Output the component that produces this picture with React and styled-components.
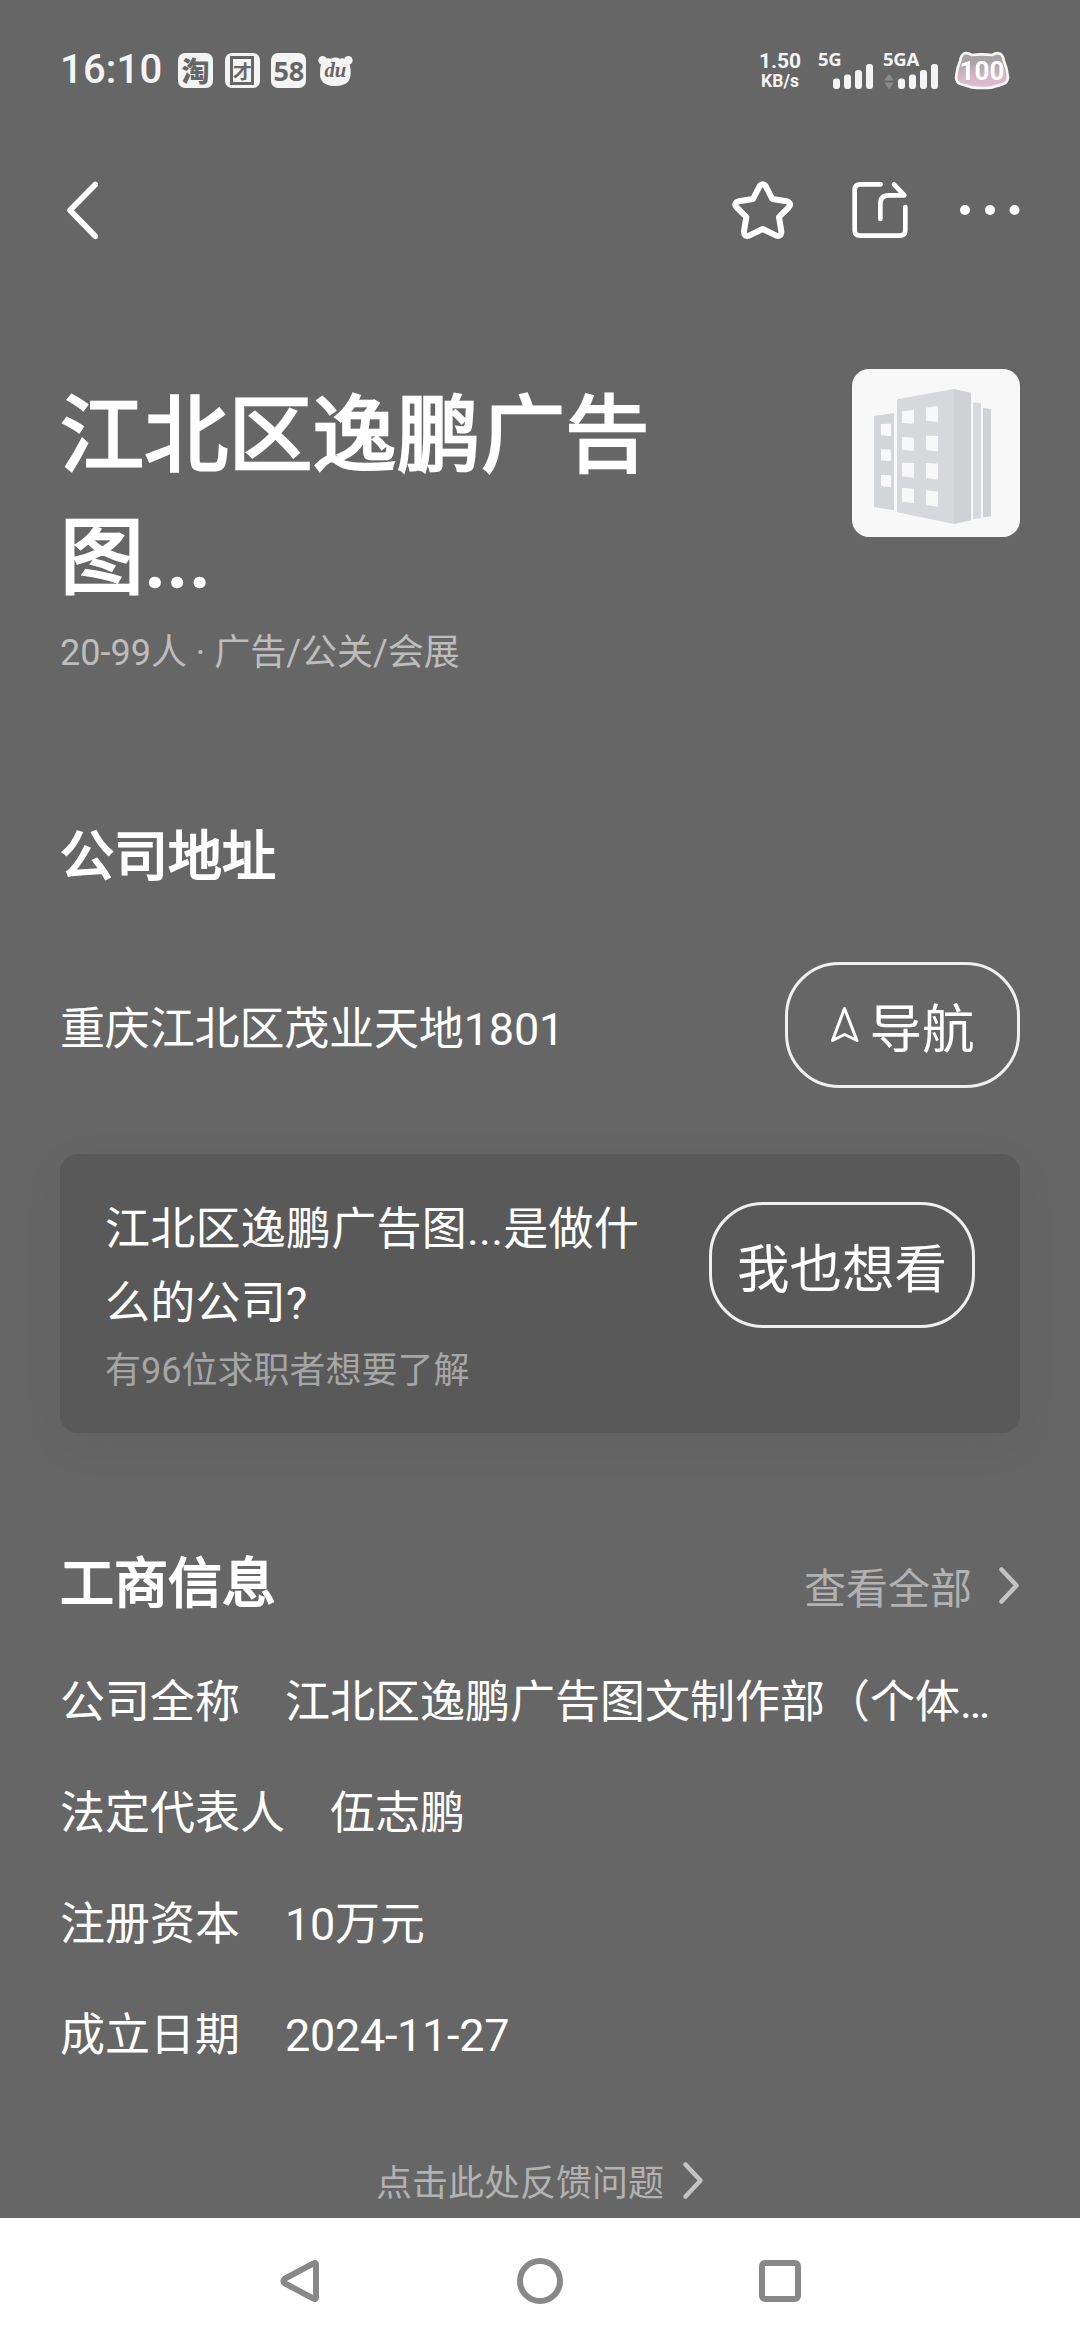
import styled, { createGlobalStyle } from "styled-components";

const businessInfo = [
  { label: "公司全称", value: "江北区逸鹏广告图文制作部（个体…" },
  { label: "法定代表人", value: "伍志鹏" },
  { label: "注册资本", value: "10万元", tight: true },
  { label: "成立日期", value: "2024-11-27", tight: true },
];

export default function App() {
  return (
    <Page>
      <GlobalStyle />
      <StatusBar />
      <Header />
      <Content>
        <Company />
        <Address />
        <QuestionCard />
        <BusinessInfo />
        <Feedback>
          点击此处反馈问题
          <Chevron />
        </Feedback>
      </Content>
      <SystemNav />
    </Page>
  );
}

function StatusBar() {
  return (
    <StatusWrapper>
      <Clock>16:10</Clock>
      <AppIcons>
        <AppBadge $size={28} $weight={900}>淘</AppBadge>
        <AppBadge $size={19} $weight={700}>
          <BadgeFrame>才</BadgeFrame>
        </AppBadge>
        <AppBadge $size={27} $weight={700} $latin>58</AppBadge>
        <svg width="35" height="35" viewBox="0 0 105 105">
          <circle cx="14" cy="22" r="13" fill="#f4f4f4" />
          <circle cx="91" cy="22" r="13" fill="#f4f4f4" />
          <path
            d="M18 20Q30 13 38 17Q52 10 66 17Q76 13 88 21Q98 34 98 58Q100 99 52 99Q6 99 6 62Q5 34 18 20Z"
            fill="#f4f4f4"
          />
          <DuText x="52" y="73" textAnchor="middle">du</DuText>
        </svg>
      </AppIcons>
      <Speed>
        <SpeedValue>1.50</SpeedValue>
        <SpeedUnit>KB/s</SpeedUnit>
      </Speed>
      <Signal $gap={16}>
        <SignalLabel>5G</SignalLabel>
        <SignalBars />
      </Signal>
      <Signal $gap={9}>
        <SignalLabel>5GA</SignalLabel>
        <SignalBars arrows />
      </Signal>
      <Battery />
    </StatusWrapper>
  );
}

function SignalBars({ arrows }) {
  return (
    <BarsSvg width="56" height="26" viewBox="0 0 56 26">
      {arrows && <path d="M1 17.500L6 11L11 17.500ZM1 19.500L6 26L11 19.500Z" fill="#8c8c8c" />}
      <g fill="#f4f4f4">
        <rect x="15" y="15.500" width="7" height="10.500" rx="3" />
        <rect x="26" y="11.500" width="7" height="14.500" rx="3" />
        <rect x="37" y="7" width="7" height="19" rx="3" />
        <rect x="48" y="1" width="7" height="25" rx="3" />
      </g>
    </BarsSvg>
  );
}

function Battery() {
  return (
    <BatterySvg width="56" height="40" viewBox="0 0 168 120">
      <defs>
        <linearGradient id="battery" x1="0" y1="0" x2="0" y2="1">
          <stop offset="0.3" stopColor="#a9a3a6" />
          <stop offset="0.6" stopColor="#d0b4c2" />
          <stop offset="1" stopColor="#e2bfd0" />
        </linearGradient>
      </defs>
      <path
        d="M31 10Q42 7 53 15Q84 11 115 15Q127 6 138 11Q147 16 149 31Q160 56 162 82Q161 98 145 103Q128 107 116 112Q84 116 54 112Q36 107 22 103Q7 98 6 82Q8 56 19 31Q21 15 31 10Z"
        fill="url(#battery)"
        stroke="#f6f6f6"
        strokeWidth="8"
      />
      <BatteryText x="84" y="89" textAnchor="middle">100</BatteryText>
    </BatterySvg>
  );
}

function Header() {
  return (
    <HeaderWrapper>
      <LineIcon width="34" height="60" viewBox="64 180 34 60" strokeWidth="5.700">
        <path d="M95.300 184.500L70 210.300L95.300 236.300" />
      </LineIcon>
      <HeaderActions>
        <LineIcon width="62" height="60" viewBox="94 60 186 180" strokeWidth="18">
          <path d="M177 78Q186 67 195 78L215 117L258 124Q275 130 264 142L235 171L242 214Q243 231 227 227L186 207L145 227Q129 231 130 214L137 171L108 142Q97 130 114 124L157 117Z" />
        </LineIcon>
        <LineIcon width="58" height="60" viewBox="452 60 174 180" strokeWidth="14">
          <path d="M541 73H480Q463 73 463 90V210Q463 227 480 227H598Q615 227 615 210V141" />
          <path d="M540 177V131Q540 106 565 106H612L581 73" />
        </LineIcon>
        <svg width="60" height="10" viewBox="0 0 60 10" fill="#fff">
          <circle cx="5" cy="5" r="5" />
          <circle cx="30" cy="5" r="5" />
          <circle cx="54.500" cy="5" r="5" />
        </svg>
      </HeaderActions>
    </HeaderWrapper>
  );
}

function Company() {
  return (
    <CompanyWrapper>
      <CompanyText>
        <CompanyName>江北区逸鹏广告图...</CompanyName>
        <CompanyMeta>20-99人 · 广告/公关/会展</CompanyMeta>
      </CompanyText>
      <CompanyLogo>
        <svg width="168" height="168" viewBox="66 57 504 504">
          <path d="M132 198L192 189V481L132 471Z" fill="#d3d6d8" />
          <path d="M201 148L372 117V522L201 487Z" fill="#d6d8dc" />
          <path d="M372 117L423 128V511L372 522Z" fill="#cfd1d5" />
          <path d="M429 157L453 160V505L429 507Z" fill="#d7dadd" />
          <path d="M459 174L483 177V499L459 502Z" fill="#cfd2d4" />
          <path
            d="M153 222L183 221V259L153 256ZM153 298L183 299V334L153 331ZM153 375L183 376V412L153 408ZM216 184L252 180V221L216 219ZM216 261L252 263V303L216 299ZM216 338L252 339V383L216 379ZM216 413L252 416V459L216 455ZM288 173L324 168V215L288 213ZM288 257L324 258V304L288 301ZM288 339L324 341V389L288 384ZM288 421L324 425V470L288 465Z"
            fill="#f8f8f9"
          />
        </svg>
      </CompanyLogo>
    </CompanyWrapper>
  );
}

function Address() {
  return (
    <section>
      <SectionTitle>公司地址</SectionTitle>
      <AddressRow>
        <AddressText>重庆江北区茂业天地1801</AddressText>
        <OutlineButton $width={235}>
          <LineIcon width="29" height="38" viewBox="0 0 29 38" strokeWidth="3">
            <path d="M14.500 2.500L27 34.500L14.500 28.500L2.500 34.500Z" />
          </LineIcon>
          导航
        </OutlineButton>
      </AddressRow>
    </section>
  );
}

function QuestionCard() {
  return (
    <Card>
      <CardText>
        <Question>江北区逸鹏广告图...是做什么的公司?</Question>
        <CardHint>有96位求职者想要了解</CardHint>
      </CardText>
      <OutlineButton $width={266}>我也想看</OutlineButton>
    </Card>
  );
}

function BusinessInfo() {
  return (
    <section>
      <InfoHeader>
        <SectionTitle>工商信息</SectionTitle>
        <ViewAll>
          查看全部
          <Chevron />
        </ViewAll>
      </InfoHeader>
      <InfoList>
        {businessInfo.map(({ label, value, tight }) => (
          <InfoRow key={label}>
            <dt>{label}</dt>
            <InfoValue $tight={tight}>{value}</InfoValue>
          </InfoRow>
        ))}
      </InfoList>
    </section>
  );
}

function Chevron() {
  return (
    <LineIcon width="22" height="40" viewBox="0 0 22 40" strokeWidth="4.500" $color="#c4c4c4">
      <path d="M3.500 4.500L18.500 20.500L3.500 36.500" />
    </LineIcon>
  );
}

function SystemNav() {
  return (
    <NavWrapper>
      <NavIcon viewBox="0 0 48 48">
        <path d="M36.500 7Q40 4.500 40 8V40Q40 43.500 36.500 41L9 26.500Q5.500 24 9 21.500Z" />
      </NavIcon>
      <NavIcon viewBox="0 0 48 48">
        <circle cx="24" cy="24" r="20" />
      </NavIcon>
      <NavIcon viewBox="0 0 48 48">
        <rect x="6" y="6" width="36" height="36" rx="3" />
      </NavIcon>
    </NavWrapper>
  );
}

const GlobalStyle = createGlobalStyle`
  * {
    box-sizing: border-box;
  }

  body {
    margin: 0;
    background-color: #666;
    font-family: Roboto, "Noto Sans CJK SC", sans-serif;
  }

  svg {
    display: block;
    flex: none;
  }

  h1, h2, p, dl, dd {
    margin: 0;
  }
`;

const Page = styled.div`
  display: flex;
  flex-direction: column;
  width: 1080px;
  height: 2344px;
  overflow: hidden;
  color: #fff;
  background-color: #666;
`;

const StatusWrapper = styled.div`
  display: flex;
  align-items: center;
  height: 140px;
  padding: 0 70px 0 60px;
  color: #f4f4f4;
`;

const Clock = styled.span`
  width: 118px;
  font-size: 40px;
  font-weight: 500;
  line-height: 44px;
  letter-spacing: 0.2px;
`;

const AppIcons = styled.div`
  display: flex;
  gap: 11.7px;
`;

const AppBadge = styled.span`
  display: flex;
  align-items: center;
  justify-content: center;
  width: 35px;
  height: 35px;
  border-radius: 7px;
  background-color: #f4f4f4;
  color: #666;
  font-family: ${({ $latin }) => ($latin ? '"Noto Sans"' : '"Noto Sans CJK SC"')}, sans-serif;
  font-size: ${({ $size }) => $size}px;
  font-weight: ${({ $weight }) => $weight};
  line-height: 35px;
`;

const BadgeFrame = styled.span`
  display: flex;
  align-items: center;
  justify-content: center;
  width: 24px;
  height: 29px;
  border: 3px solid #666;
  line-height: 1;
`;

const DuText = styled.text`
  fill: #666;
  font-family: "Liberation Serif", serif;
  font-size: 62px;
  font-style: italic;
  font-weight: 700;
`;

const Speed = styled.div`
  display: flex;
  flex-direction: column;
  align-items: center;
  width: 44px;
  margin-left: auto;
  padding-top: 2px;
  font-weight: 700;
`;

const SpeedValue = styled.span`
  font-size: 21px;
  line-height: 21px;
`;

const SpeedUnit = styled.span`
  font-size: 17.5px;
  line-height: 19px;
`;

const Signal = styled.div`
  position: relative;
  width: 56px;
  height: 38px;
  margin-left: ${({ $gap }) => $gap}px;
`;

const SignalLabel = styled.span`
  position: absolute;
  top: -1px;
  left: 0;
  font-family: "Noto Sans", sans-serif;
  font-size: 18.5px;
  font-weight: 700;
  line-height: 18px;
  letter-spacing: -0.3px;
`;

const BarsSvg = styled.svg`
  position: absolute;
  bottom: 0;
  left: 0;
`;

const BatterySvg = styled.svg`
  margin-left: 15px;
`;

const BatteryText = styled.text`
  fill: #fff;
  font-family: Roboto, sans-serif;
  font-size: 78px;
  font-weight: 700;
`;

const HeaderWrapper = styled.header`
  display: flex;
  align-items: center;
  justify-content: space-between;
  height: 140px;
  padding: 0 60px 0 64px;
`;

const HeaderActions = styled.div`
  display: flex;
  align-items: center;
`;

const LineIcon = styled.svg`
  fill: none;
  stroke: ${({ $color }) => $color || "#fff"};
  stroke-linecap: round;
  stroke-linejoin: round;

  & + & {
    margin-left: 57px;
    margin-right: 51px;
  }
`;

const Content = styled.main`
  display: flex;
  flex-direction: column;
  flex: 1;
  padding: 89px 60px 0;
`;

const CompanyWrapper = styled.section`
  display: flex;
  align-items: flex-start;
  justify-content: space-between;
  height: 438px;
`;

const CompanyText = styled.div`
  width: 640px;
  padding-top: 7px;
`;

const CompanyName = styled.h1`
  font-size: 84px;
  font-weight: 400;
  line-height: 122px;
  letter-spacing: 0.2px;
  word-break: break-all;
  -webkit-text-stroke: 2.6px #fff;
`;

const CompanyMeta = styled.p`
  margin-top: 8px;
  color: #bdbdbd;
  font-size: 36px;
  line-height: 50px;
`;

const CompanyLogo = styled.div`
  overflow: hidden;
  border-radius: 17px;
  background-color: #f8f8f9;
`;

const SectionTitle = styled.h2`
  font-size: 54px;
  font-weight: 400;
  line-height: 102px;
  -webkit-text-stroke: 2px #fff;
`;

const AddressRow = styled.div`
  display: flex;
  align-items: center;
  justify-content: space-between;
  margin-top: 53px;
`;

const BodyText = styled.p`
  font-size: 45px;
  line-height: 74px;
`;

const AddressText = styled(BodyText)`
  padding-top: 9px;
  letter-spacing: -0.15px;
`;

const OutlineButton = styled.button`
  display: flex;
  align-items: center;
  justify-content: center;
  gap: 10px;
  width: ${({ $width }) => $width}px;
  height: 126px;
  padding: 0;
  border: 3px solid #f0f0f0;
  border-radius: 54px;
  background: none;
  color: #fff;
  font-family: inherit;
  font-size: 52.5px;
`;

const Card = styled.section`
  display: flex;
  align-items: flex-start;
  justify-content: space-between;
  height: 279px;
  margin-top: 66px;
  padding: 39px 45px 0;
  border-radius: 18px;
  background-color: #595959;
  box-shadow: 0 12px 48px rgba(0, 0, 0, 0.05);

  ${OutlineButton} {
    margin-top: 9px;
  }
`;

const CardText = styled.div`
  width: 545px;
`;

const Question = styled(BodyText)`
  letter-spacing: 0.25px;
  word-break: break-all;
`;

const CardHint = styled.p`
  margin-top: 5px;
  color: #a6a6a6;
  font-size: 36px;
  line-height: 50px;
`;

const InfoHeader = styled.div`
  display: flex;
  align-items: center;
  justify-content: space-between;
  margin-top: 101px;
`;

const ViewAll = styled.div`
  display: flex;
  align-items: center;
  gap: 26px;
  color: #b2b2b2;
  font-size: 42px;
`;

const InfoList = styled.dl`
  margin-top: 11px;
`;

const InfoRow = styled.div`
  display: flex;
  gap: 45px;
  height: 111px;
  font-size: 45px;
  line-height: 111px;
  white-space: nowrap;
`;

const InfoValue = styled.dd`
  letter-spacing: ${({ $tight }) => ($tight ? "-0.3px" : "0")};
`;

const Feedback = styled.div`
  display: flex;
  align-items: center;
  justify-content: center;
  gap: 18px;
  height: 60px;
  margin-top: 59px;
  color: #b2b2b2;
  font-size: 36px;
`;

const NavWrapper = styled.nav`
  display: flex;
  align-items: center;
  justify-content: center;
  gap: 192px;
  height: 126px;
  background-color: #fff;
`;

const NavIcon = styled.svg`
  width: 48px;
  height: 48px;
  fill: none;
  stroke: #888;
  stroke-width: 6;
`;
